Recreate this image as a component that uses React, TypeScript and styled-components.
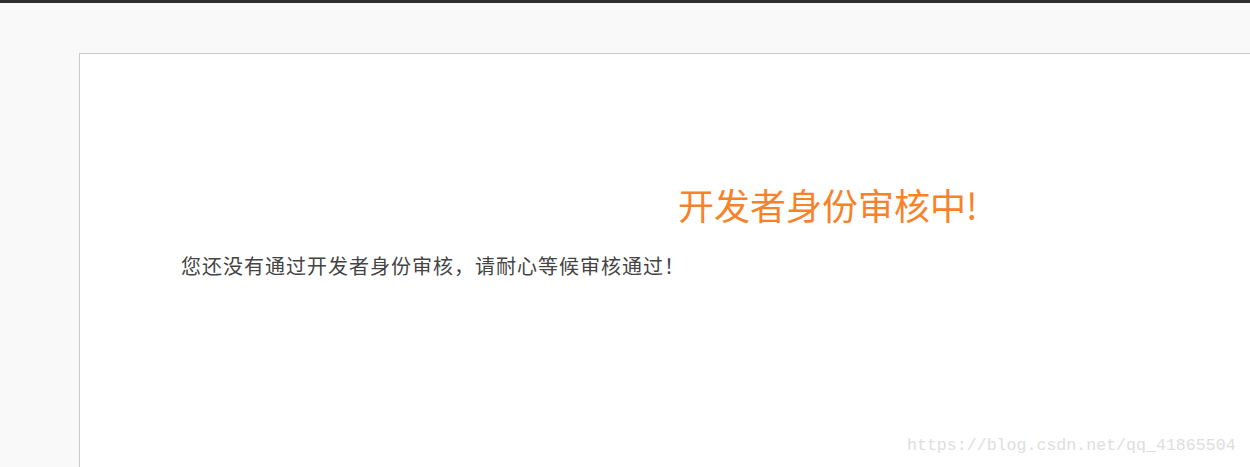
import React from 'react';
import { styled, createGlobalStyle } from 'styled-components';

const GlobalStyle = createGlobalStyle`
  html, body {
    margin: 0;
    padding: 0;
    background: #f9f9f9;
    overflow: hidden;
  }
  body {
    font-family: "Noto Sans CJK SC", "Liberation Sans", sans-serif;
  }
`;

function App() {
  return (
    <PageBox>
      <GlobalStyle />
      <TopBar />
      <ReviewCard>
        <ReviewTitle>开发者身份审核中!</ReviewTitle>
        <ReviewText>您还没有通过开发者身份审核，请耐心等候审核通过！</ReviewText>
      </ReviewCard>
      <Watermark>https://blog.csdn.net/qq_41865504</Watermark>
    </PageBox>
  );
}

const PageBox = styled.div`
  position: relative;
  width: 1250px;
  height: 467px;
  overflow: hidden;
  background: #f9f9f9;
`;

const TopBar = styled.div`
  height: 3px;
  background: #2e2e2e;
`;

const ReviewCard = styled.div`
  margin: 50px 0 0 79px;
  height: 420px;
  background: #fff;
  border-top: 1px solid #cbcbcb;
  border-left: 1px solid #cbcbcb;
  padding-top: 126px;
  box-sizing: border-box;
`;

const ReviewTitle = styled.h1`
  margin: 0 0 24px 598px;
  font-size: 36px;
  font-weight: 400;
  line-height: 48px;
  color: #f8822a;
  white-space: nowrap;
`;

const ReviewText = styled.p`
  margin: 0 0 0 101px;
  font-size: 20px;
  font-weight: 400;
  line-height: 28px;
  letter-spacing: 1px;
  color: #444;
  white-space: nowrap;
`;

const Watermark = styled.div`
  position: absolute;
  left: 907px;
  top: 434px;
  font-family: "Liberation Mono", monospace;
  font-size: 16.6px;
  line-height: 24px;
  color: #dedede;
  white-space: nowrap;
`;

export default App;
